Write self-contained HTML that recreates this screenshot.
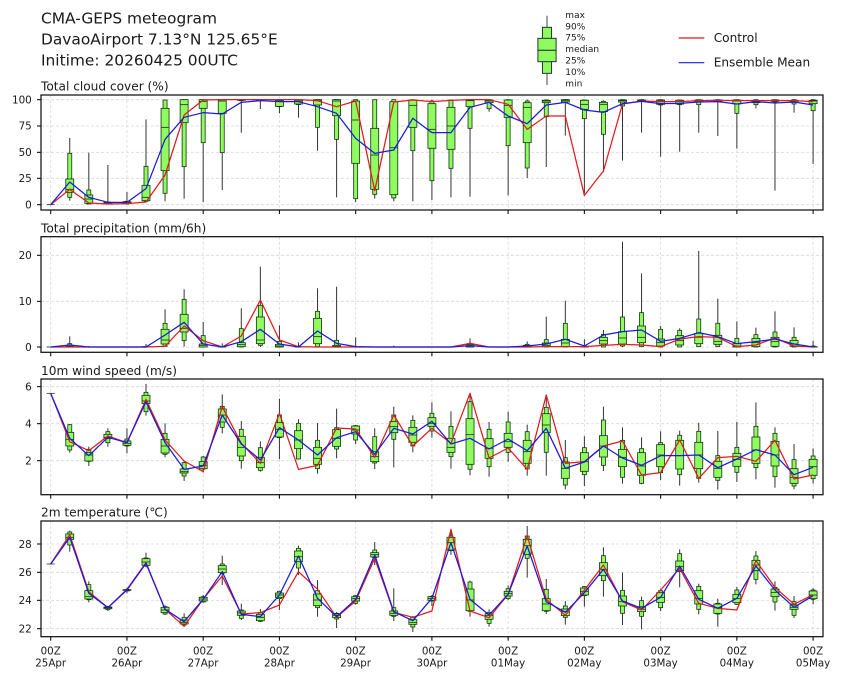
<!DOCTYPE html>
<html><head><meta charset="utf-8"><style>
html,body{margin:0;padding:0;background:#fff}
svg{display:block;filter:blur(.3px)}
text{font-family:"DejaVu Sans","Liberation Sans",sans-serif;fill:#1a1a1a}
.t{font-size:15.42px}.p{font-size:12.15px}.y{font-size:10.4px;text-anchor:end}.x{font-size:10.3px;text-anchor:middle}.l{font-size:9px}.c{font-size:12.15px}
</style></head><body>
<svg id="s" xmlns="http://www.w3.org/2000/svg" width="842" height="680" viewBox="0 0 842 680">
<rect width="842" height="680" fill="#fff"/>
<g id="plots"></g>
<text class="t" x="41" y="23.3">CMA-GEPS meteogram</text>
<text class="t" x="41" y="44.3">DavaoAirport 7.13°N 125.65°E</text>
<text class="t" x="41" y="65.3">Initime: 20260425 00UTC</text>
<text class="p" x="41" y="90.3">Total cloud cover (%)</text>
<text class="p" x="41" y="232.3">Total precipitation (mm/6h)</text>
<text class="p" x="41" y="375">10m wind speed (m/s)</text>
<text class="p" x="41" y="516.7">2m temperature (℃)</text>
<g>
<text class="y" x="31.8" y="103.5">100</text><text class="y" x="31.8" y="129.7">75</text><text class="y" x="31.8" y="156">50</text><text class="y" x="31.8" y="182.2">25</text><text class="y" x="31.8" y="208.5">0</text>
<text class="y" x="31.8" y="259.1">20</text><text class="y" x="31.8" y="305.1">10</text><text class="y" x="31.8" y="350.8">0</text>
<text class="y" x="31.8" y="390.5">6</text><text class="y" x="31.8" y="427.5">4</text><text class="y" x="31.8" y="464.5">2</text>
<text class="y" x="31.8" y="547.8">28</text><text class="y" x="31.8" y="576.1">26</text><text class="y" x="31.8" y="604.1">24</text><text class="y" x="31.8" y="632.5">22</text>
</g>
<g>
<text class="x" x="50.7" y="654.3">00Z</text><text class="x" x="50.7" y="666.7">25Apr</text>
<text class="x" x="126.9" y="654.3">00Z</text><text class="x" x="126.9" y="666.7">26Apr</text>
<text class="x" x="203.1" y="654.3">00Z</text><text class="x" x="203.1" y="666.7">27Apr</text>
<text class="x" x="279.4" y="654.3">00Z</text><text class="x" x="279.4" y="666.7">28Apr</text>
<text class="x" x="355.6" y="654.3">00Z</text><text class="x" x="355.6" y="666.7">29Apr</text>
<text class="x" x="431.9" y="654.3">00Z</text><text class="x" x="431.9" y="666.7">30Apr</text>
<text class="x" x="508.1" y="654.3">00Z</text><text class="x" x="508.1" y="666.7">01May</text>
<text class="x" x="584.3" y="654.3">00Z</text><text class="x" x="584.3" y="666.7">02May</text>
<text class="x" x="660.6" y="654.3">00Z</text><text class="x" x="660.6" y="666.7">03May</text>
<text class="x" x="736.8" y="654.3">00Z</text><text class="x" x="736.8" y="666.7">04May</text>
<text class="x" x="813.1" y="654.3">00Z</text><text class="x" x="813.1" y="666.7">05May</text>
</g>
<!-- box legend -->
<line x1="547" y1="15.7" x2="547" y2="85" stroke="#444" stroke-width="1"/>
<rect x="542.4" y="27.3" width="9.2" height="46" fill="#8ffb5e" stroke="#123" stroke-width=".9"/>
<rect x="537.9" y="38.3" width="18.2" height="23.4" fill="#8ffb5e" stroke="#123" stroke-width=".9"/>
<line x1="537.9" y1="50.3" x2="556.1" y2="50.3" stroke="#123" stroke-width="1"/>
<text class="l" x="565.3" y="18">max</text>
<text class="l" x="565.3" y="29.5">90%</text>
<text class="l" x="565.3" y="40.7">75%</text>
<text class="l" x="565.3" y="52">median</text>
<text class="l" x="565.3" y="63.7">25%</text>
<text class="l" x="565.3" y="75">10%</text>
<text class="l" x="565.3" y="86.5">min</text>
<!-- line legend -->
<line x1="678.7" y1="38" x2="704.3" y2="38" stroke="#e01b1b" stroke-width="1.2"/>
<line x1="678.7" y1="62.7" x2="704.3" y2="62.7" stroke="#1a1ae0" stroke-width="1.2"/>
<text class="c" x="713.7" y="42">Control</text>
<text class="c" x="713.7" y="66.7">Ensemble Mean</text>
</svg>
<script>
(function(){
var G=document.getElementById('plots'),NS='http://www.w3.org/2000/svg';
function el(n,a){var e=document.createElementNS(NS,n);for(var k in a)e.setAttribute(k,a[k]);G.appendChild(e);return e}
function X(i){return 50.7+19.06*i}
var L=41,R=823;
var P=[
{t:95,b:210,o:0,ticks:[299,378,457,535,614],
box:[[614,614,614,614,614,614,614],[414,460,537,568,577,592,602],[458,570,585,597,610,612,612],[495,606,607,609,612,612,613],[576,604,605,607,611,612,613],[358,499,556,592,602,604,605],[299,300,325,382,512,580,604],[299,299,299,314,368,500,596],[299,299,299,304,325,428,606],[299,299,299,303,340,458,570],[299,299,299,300,301,302,398],[299,299,299,300,301,302,327],[299,299,299,302,319,320,340],[299,299,299,303,312,314,353],[299,299,299,302,315,382,452],[299,299,299,303,347,418,592],[299,299,303,360,490,596,606],[299,299,385,465,568,583,596],[299,299,305,443,584,594,604],[299,299,300,316,382,452,604],[299,303,311,388,445,542,600],[299,300,322,378,448,505,592],[299,299,300,302,320,385,590],[299,299,300,303,308,326,335],[299,299,300,316,352,437,586],[299,303,308,322,428,504,534],[299,300,301,303,308,350,501],[299,299,299,302,306,307,407],[299,300,301,313,328,356,580],[301,304,307,313,335,403,515],[299,299,300,302,306,318,482],[299,299,300,301,303,304,398],[299,299,300,303,313,315,470],[299,300,301,304,312,314,455],[299,299,300,302,305,314,398],[299,299,300,301,304,305,408],[299,299,300,303,312,340,446],[299,299,301,303,308,314,325],[299,299,300,302,304,306,572],[299,299,301,303,307,312,338],[299,299,301,303,311,332,492]],
red:[614,568,609,612,611,606,525,345,300,299,299,299,299,299,302,320,303,572,306,300,305,301,299,299,313,388,348,348,586,513,312,303,305,305,302,301,302,302,302,302,305],
blue:[614,546,592,607,607,566,418,352,338,342,307,302,305,305,320,340,415,460,450,355,398,398,322,307,348,371,315,307,330,337,311,304,311,310,306,305,312,305,309,306,315]},
{t:236.7,b:352.3,o:220,ticks:[106,244,381],
box:[[381,381,381,381,381,381,381],[349,371,376,379,381,381,381],[378,381,381,381,381,381,381],[381,381,381,381,381,381,381],[381,381,381,381,381,381,381],[372,380,380,381,381,381,381],[268,310,328,360,372,379,380],[208,238,283,325,336,362,380],[306,347,372,376,381,381,381],[370,380,381,381,381,381,381],[265,326,368,374,380,381,381],[140,256,291,360,371,376,381],[316,364,373,378,381,381,381],[367,380,381,381,381,381,381],[205,274,295,350,371,380,381],[200,361,376,379,381,381,381],[352,380,381,381,381,381,381],[381,381,381,381,381,381,381],[377,381,381,381,381,381,381],[381,381,381,381,381,381,381],[381,381,381,381,381,381,381],[381,381,381,381,381,381,381],[355,370,374,378,381,381,381],[381,381,381,381,381,381,381],[381,381,381,381,381,381,381],[364,373,376,379,381,381,381],[290,359,369,376,380,381,381],[242,310,358,369,380,381,381],[358,378,380,381,381,381,381],[330,343,352,362,372,381,381],[65,291,335,354,372,378,381],[160,278,318,352,368,380,381],[318,328,357,368,378,381,381],[325,331,347,362,375,381,381],[93,297,340,352,371,380,381],[236,310,346,364,373,380,381],[304,355,371,378,381,381,381],[323,344,355,368,380,381,381],[274,336,352,365,379,381,381],[322,352,361,372,379,381,381],[362,378,380,381,381,381,381]],
red:[381,381,381,381,381,381,379,318,362,381,348,240,360,380,381,381,381,381,381,381,381,381,370,381,381,381,380,380,380,376,373,375,380,357,350,352,380,375,354,378,381],
blue:[381,375,381,381,381,381,345,307,372,381,365,328,372,381,333,370,380,381,381,381,381,381,377,381,381,378,372,358,378,345,335,330,364,355,338,350,371,365,357,372,381]},
{t:379,b:494.7,o:360,ticks:[80,191,302],
box:[[100,100,100,100,100,100,100],[192,194,217,238,258,270,278],[260,268,278,285,303,304,318],[205,215,223,232,236,248,260],[205,237,243,250,256,258,280],[72,97,106,123,131,155,167],[190,220,238,258,279,283,292],[303,308,327,335,339,348,363],[288,291,305,316,326,327,338],[103,139,147,165,186,202,220],[183,208,229,262,288,302,326],[244,263,292,308,323,331,335],[116,165,188,208,231,233,297],[178,190,212,240,266,297,298],[189,241,262,295,313,326,341],[146,203,209,235,259,267,295],[195,197,198,210,222,240,252],[205,230,275,290,305,309,327],[140,165,185,200,218,238,322],[166,181,202,225,247,258,277],[127,160,173,190,199,213,233],[154,199,235,262,277,290,326],[100,125,176,224,313,328,346],[186,208,236,265,295,320,350],[155,186,220,245,262,277,305],[194,215,241,275,310,327,347],[105,142,161,195,218,277,347],[240,293,306,325,355,375,388],[229,263,278,305,334,344,378],[140,180,227,258,291,316,333],[202,241,268,292,320,352,371],[232,266,278,318,346,370,373],[214,248,254,285,320,338,360],[212,226,241,287,327,344,377],[188,214,247,285,326,355,368],[213,287,304,325,352,361,389],[186,262,280,298,319,337,366],[127,199,231,270,310,323,358],[202,220,244,285,318,350,383],[252,299,326,352,370,378,388],[265,288,298,320,346,356,371]],
red:[100,245,272,228,248,118,240,303,335,140,250,310,160,328,316,204,207,292,165,258,205,250,100,294,264,328,105,310,305,258,243,345,338,240,355,293,289,304,241,357,345],
blue:[100,235,287,232,248,125,248,328,318,165,252,300,203,240,285,233,215,283,205,222,184,252,235,267,237,272,205,325,306,258,294,316,287,287,285,323,297,269,285,344,322]},
{t:521,b:636.7,o:500,ticks:[132,217,301,386],
box:[[192,192,192,192,192,192,192],[92,96,102,112,118,135,155],[244,254,272,290,297,299,307],[318,319,321,323,326,329,333],[263,268,269,270,271,273,280],[158,174,176,186,196,198,202],[316,320,322,330,338,342,345],[340,352,360,367,372,375,380],[285,290,292,297,303,306,308],[167,192,197,207,218,220,255],[311,330,333,339,346,355,360],[327,338,343,352,362,364,366],[272,274,279,285,292,296,330],[137,145,153,170,185,204,225],[240,272,282,300,317,323,350],[336,340,342,346,353,357,384],[285,287,290,296,303,310,314],[126,150,158,164,171,173,195],[265,323,333,340,346,349,363],[348,352,359,367,373,381,396],[285,289,290,295,301,303,318],[90,108,112,128,150,152,165],[242,246,267,300,332,334,350],[328,337,341,346,358,370,380],[256,266,274,281,288,296,300],[78,108,118,137,163,175,233],[237,268,296,312,332,334,342],[303,318,327,335,347,352,374],[258,260,264,274,285,287,320],[142,167,188,208,227,242,290],[218,271,288,305,318,340,375],[290,302,320,328,335,349,388],[266,272,278,292,307,323,333],[148,161,183,200,212,215,262],[251,259,272,295,312,328,343],[296,310,312,323,340,342,380],[261,270,283,296,308,313,315],[153,168,181,195,212,238,253],[244,262,267,277,290,306,332],[288,305,315,322,328,346,354],[264,270,273,285,296,298,313]],
red:[192,104,275,323,268,188,328,379,297,228,342,338,315,215,268,352,303,175,337,352,333,88,333,353,283,108,298,346,270,195,305,330,270,205,310,325,330,182,262,313,284],
blue:[192,112,280,323,270,190,328,365,298,215,343,350,285,168,295,350,298,165,335,362,295,128,298,345,283,138,305,337,278,208,303,325,292,198,298,325,295,198,270,322,287]}
];
var GREEN='#8ffb5e',DK='#143214';
P.forEach(function(p){
  var Y=function(z){return +(p.o+z/3).toFixed(2)};
  for(var d=0;d<=10;d++){var x=X(d*4);
    el('line',{x1:x,x2:x,y1:p.t,y2:p.b,stroke:'#d9d9d9','stroke-width':.8,'stroke-dasharray':'3 2'});
    el('line',{x1:x,x2:x,y1:p.b,y2:p.b+4,stroke:'#111','stroke-width':1.1});
  }
  p.ticks.forEach(function(z){var y=Y(z);
    el('line',{x1:L,x2:R,y1:y,y2:y,stroke:'#d9d9d9','stroke-width':.8,'stroke-dasharray':'3 2'});
    el('line',{x1:L-4,x2:L,y1:y,y2:y,stroke:'#111','stroke-width':1.1});
  });
  p.box.forEach(function(b,i){var x=X(i);
    if(b[0]!=b[6])el('line',{x1:x,x2:x,y1:Y(b[0]),y2:Y(b[6]),stroke:'#333','stroke-width':1});
    el('rect',{x:x-2,y:Y(b[1]),width:4,height:Y(b[5])-Y(b[1]),fill:GREEN,stroke:DK,'stroke-width':.8});
    el('rect',{x:x-4,y:Y(b[2]),width:8,height:Y(b[4])-Y(b[2]),fill:GREEN,stroke:DK,'stroke-width':.8});
    el('line',{x1:x-4,x2:x+4,y1:Y(b[3]),y2:Y(b[3]),stroke:DK,'stroke-width':.8});
  });
  [['red','#e01b1b'],['blue','#1a1ae0']].forEach(function(s){
    el('polyline',{points:p[s[0]].map(function(z,i){return X(i).toFixed(2)+','+Y(z)}).join(' '),fill:'none',stroke:s[1],'stroke-width':1.25,'stroke-linejoin':'round'});
  });
  el('rect',{x:L,y:p.t,width:R-L,height:p.b-p.t,fill:'none',stroke:'#111','stroke-width':1.25});
});
})();
</script>
</body></html>
